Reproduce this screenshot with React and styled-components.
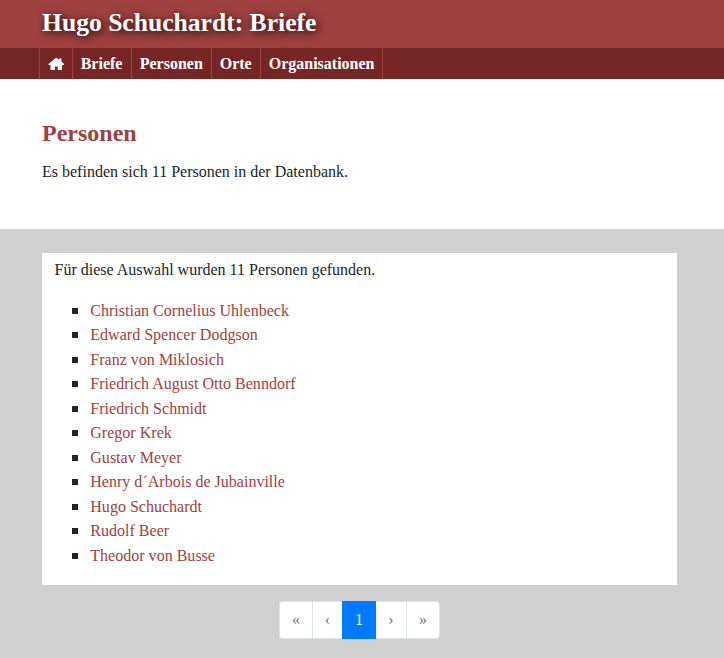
import React from "react";
import styled, { createGlobalStyle } from "styled-components";

const GlobalStyle = createGlobalStyle`
  *, *::before, *::after { box-sizing: border-box; }
  body {
    margin: 0;
    background: #d0d0d0;
    color: #212529;
    font-family: "Liberation Serif", "Times New Roman", serif;
    font-size: 16px;
    line-height: 24.48px;
    overflow: hidden;
  }
`;

const Header = styled.header`
  height: 48px;
  padding: 8px 42px 0;
  background: #a04141;
`;

const SiteTitle = styled.h1`
  margin: 0;
  color: #fff;
  font-size: 25.6px;
  font-weight: bold;
  line-height: 30px;
  text-shadow: 2px 2px 10px #000;
`;

const NavBar = styled.nav`
  display: flex;
  height: 31px;
  padding-left: 39px;
  background: #772626;
`;

const NavItem = styled.a`
  display: flex;
  align-items: center;
  width: ${({ $width }) => $width}px;
  padding: 2px 0 0 7.7px;
  border-left: 1px solid #a04141;
  color: #fff;
  font-weight: bold;
  white-space: nowrap;
  text-decoration: none;

  &:last-child { border-right: 1px solid #a04141; }
`;

const HomeIcon = styled.svg`
  display: block;
  width: 16px;
  height: 12px;
  margin-bottom: 1px;
  fill: #fff;
`;

const Intro = styled.section`
  height: 150px;
  padding: 40px 42px 0;
  background: #fff;
`;

const Heading = styled.h2`
  margin: 0 0 12px;
  color: #a04141;
  font-size: 24px;
  line-height: 29px;
`;

const Text = styled.p`
  margin: 0;
`;

const Results = styled.section`
  height: 332px;
  margin: 24px 47px 16px 42px;
  padding: 5px 12.5px;
  background: #fff;
`;

const PersonList = styled.ul`
  margin: 16.5px 0 0;
  padding: 0 0 0 17.5px;
  list-style: none;
`;

const Person = styled.li`
  display: flex;
  align-items: center;

  &::before {
    content: "";
    width: 6px;
    height: 6px;
    margin: 0 12.3px 1px 0;
    background: #212529;
  }
`;

const PersonLink = styled.a`
  color: #a04141;
  letter-spacing: 0.015px;
  text-decoration: none;
`;

const Pagination = styled.nav`
  display: flex;
  width: 161px;
  height: 38px;
  margin: 0 0 0 279px;
`;

const PageButton = styled.a`
  display: flex;
  align-items: center;
  justify-content: center;
  width: ${({ $width }) => $width}px;
  border: 1px solid ${({ $active }) => ($active ? "#007bff" : "#dee2e6")};
  border-right-width: ${({ $active }) => ($active ? "1px" : "0")};
  border-left-width: ${({ $joined }) => ($joined ? "0" : "1px")};
  background: ${({ $active }) => ($active ? "#007bff" : "#fff")};
  color: ${({ $active }) => ($active ? "#fff" : "#6c757d")};

  &:first-child { border-radius: 4px 0 0 4px; }
  &:last-child { border-right-width: 1px; border-radius: 0 4px 4px 0; }
`;

const navigation = [
  { label: "Briefe", width: 59 },
  { label: "Personen", width: 80 },
  { label: "Orte", width: 49 },
  { label: "Organisationen", width: 123 },
];

const people = [
  "Christian Cornelius Uhlenbeck",
  "Edward Spencer Dodgson",
  "Franz von Miklosich",
  "Friedrich August Otto Benndorf",
  "Friedrich Schmidt",
  "Gregor Krek",
  "Gustav Meyer",
  "Henry d´Arbois de Jubainville",
  "Hugo Schuchardt",
  "Rudolf Beer",
  "Theodor von Busse",
];

const pages = [
  { label: "«", width: 33 },
  { label: "‹", width: 30 },
  { label: "1", width: 34, active: true },
  { label: "›", width: 30, joined: true },
  { label: "»", width: 34 },
];

export default function App() {
  return (
    <>
      <GlobalStyle />
      <Header>
        <SiteTitle>Hugo Schuchardt: Briefe</SiteTitle>
      </Header>
      <NavBar>
        <NavItem $width={33} aria-label="Start">
          <HomeIcon viewBox="0 0 16 12">
            <path d="M7.6 0h1.2L11.3 1.8V.4h2.2v3L16 6.1v1H14V12H9.7V8.5H7V12H2.5V7.1H.6V6.1Z" />
          </HomeIcon>
        </NavItem>
        {navigation.map(({ label, width }) => (
          <NavItem key={label} $width={width}>{label}</NavItem>
        ))}
      </NavBar>
      <Intro>
        <Heading>Personen</Heading>
        <Text>Es befinden sich 11 Personen in der Datenbank.</Text>
      </Intro>
      <Results>
        <Text>Für diese Auswahl wurden 11 Personen gefunden.</Text>
        <PersonList>
          {people.map((name) => (
            <Person key={name}><PersonLink>{name}</PersonLink></Person>
          ))}
        </PersonList>
      </Results>
      <Pagination>
        {pages.map(({ label, width, active, joined }) => (
          <PageButton key={label} $width={width} $active={active} $joined={joined}>{label}</PageButton>
        ))}
      </Pagination>
    </>
  );
}
